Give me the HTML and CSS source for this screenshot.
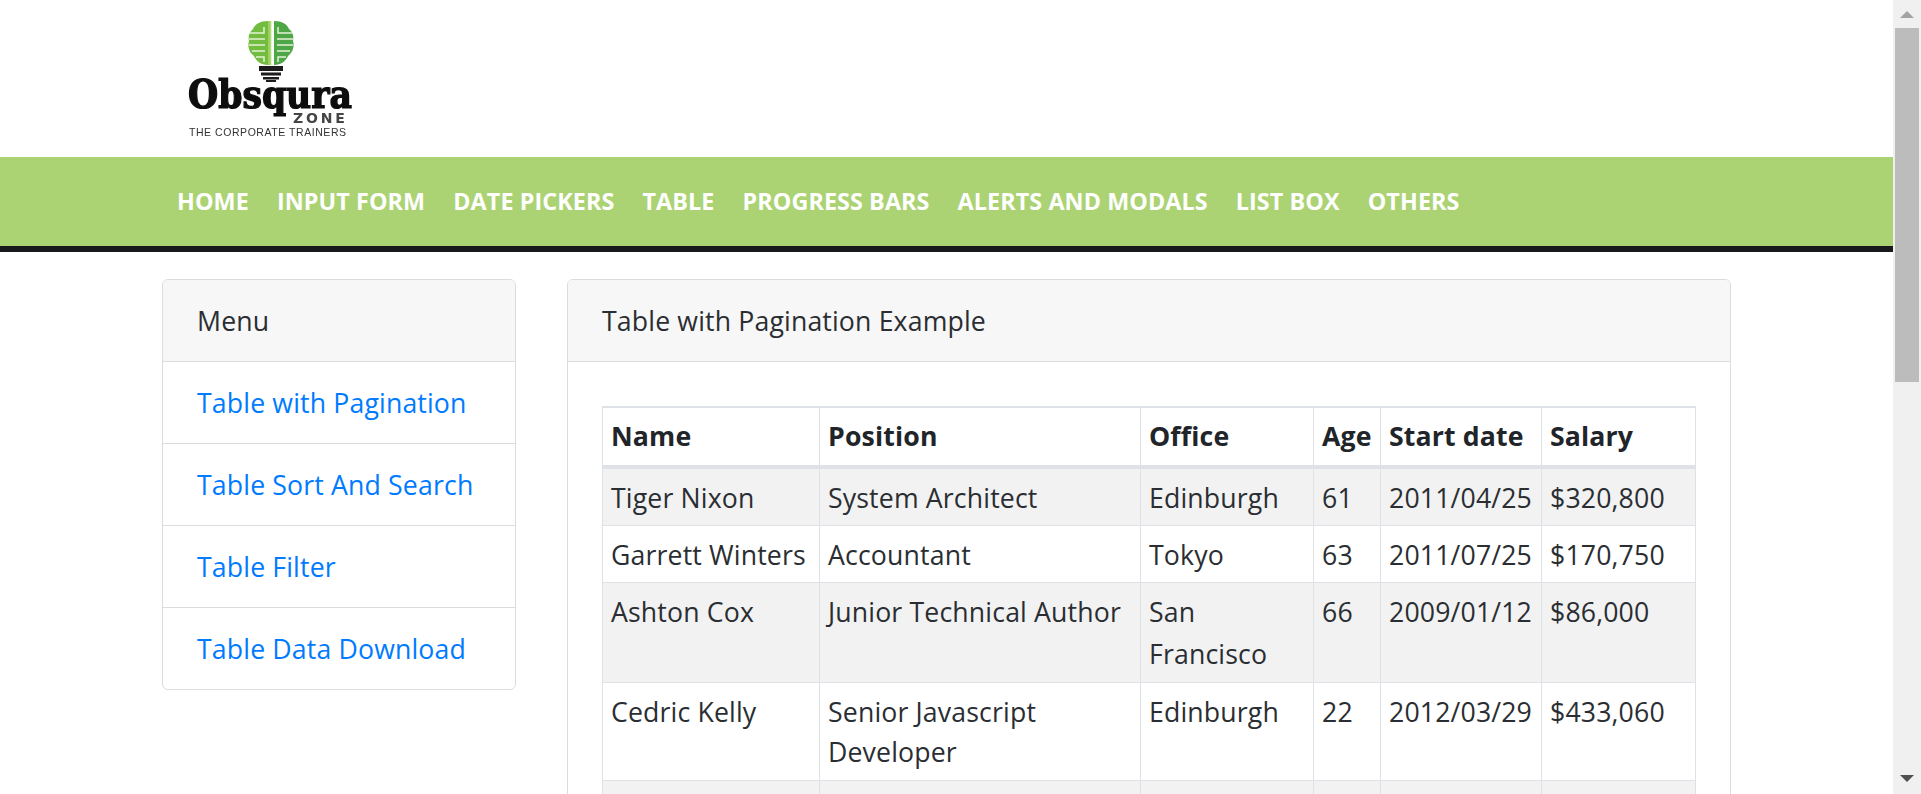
FILE: index.html
```html
<!DOCTYPE html>
<html>
<head>
	<meta charset="utf-8">
	<title>Obsqura Zone - Table with Pagination</title>
	<link rel="stylesheet" href="styles.css">
</head>

<body>

	<div class="page">
		<header class="top">
			<svg class="logo" width="180" height="130" viewBox="0 0 180 130">
				<defs>
					<filter id="soft"><feGaussianBlur stdDeviation="0.5"/></filter>
				</defs>
				<g filter="url(#soft)">
					<!-- bulb -->
					<path class="bulb-l" d="M88 3C80 3 75 6 73 11C69 14 68 19 69 23C67 29 70 35 74 38C76 43 81 47 88 47Z"/>
					<path class="bulb-r" d="M94 3C102 3 107 6 109 11C113 14 114 19 113 23C115 29 112 35 108 38C106 43 101 47 94 47Z"/>
					<path class="bulb-m" d="M88 3H91V47H88Z"/>
					<path class="bulb-c" d="M91.500 3V47M70 15H84V9M69 21H85M69 27H85M72 33H85M76 39H84V44M112 15H98V9M113 21H97M113 27H97M110 33H97M106 39H98V44"/>
					<path class="bulb-base" d="M79 48H103V53H79ZM81 54.500H101V57.500H81ZM83 59H99V61.500H83ZM86 62H96V64H86Z"/>
					<text class="logo-main" x="8" y="90">Obsqura</text>
					<text class="logo-zone" x="113" y="105">ZONE</text>
					<text class="logo-tag" x="9" y="118">THE CORPORATE TRAINERS</text>
				</g>
			</svg>
		</header>

		<nav class="navbar">
			<a href="#">Home</a>
			<a href="#">Input Form</a>
			<a href="#">Date Pickers</a>
			<a href="#">Table</a>
			<a href="#">Progress Bars</a>
			<a href="#">Alerts and Modals</a>
			<a href="#">List Box</a>
			<a href="#">Others</a>
		</nav>

		<div class="con">
			<aside class="card side">
				<div class="card-head">Menu</div>
				<ul class="menu">
					<li><a href="#">Table with Pagination</a></li>
					<li><a href="#">Table Sort And Search</a></li>
					<li><a href="#">Table Filter</a></li>
					<li><a href="#">Table Data Download</a></li>
				</ul>
			</aside>

			<main class="card main">
				<div class="card-head">Table with Pagination Example</div>
				<div class="card-body">
					<table class="data">
						<colgroup>
							<col class="c-name">
							<col class="c-pos">
							<col class="c-off">
							<col class="c-age">
							<col class="c-date">
							<col class="c-sal">
						</colgroup>
						<thead>
							<tr><th>Name</th><th>Position</th><th>Office</th><th>Age</th><th>Start date</th><th>Salary</th></tr>
						</thead>
						<tbody>
							<tr><td>Tiger Nixon</td><td>System Architect</td><td>Edinburgh</td><td>61</td><td>2011/04/25</td><td>$320,800</td></tr>
							<tr><td>Garrett Winters</td><td>Accountant</td><td>Tokyo</td><td>63</td><td>2011/07/25</td><td>$170,750</td></tr>
							<tr class="row-tall"><td>Ashton Cox</td><td>Junior Technical Author</td><td class="cell-wrap">San Francisco</td><td>66</td><td>2009/01/12</td><td>$86,000</td></tr>
							<tr class="row-wrap"><td>Cedric Kelly</td><td>Senior Javascript Developer</td><td>Edinburgh</td><td>22</td><td>2012/03/29</td><td>$433,060</td></tr>
							<tr class="row-next"><td></td><td></td><td></td><td></td><td></td><td></td></tr>
						</tbody>
					</table>
				</div>
			</main>
		</div>
	</div>

	<div class="scrollbar">
		<span class="arrow-up"></span>
		<span class="thumb"></span>
		<span class="arrow-down"></span>
	</div>

</body>
</html>
```

FILE: styles.css
```css
* {
	padding: 0;
	margin: 0;
	box-sizing: border-box;
}
html, body {
	height: 794px;
	overflow: hidden;
}
body {
	font-family: "Open Sans", "Noto Sans", sans-serif;
	font-size: 26.67px;
	line-height: 40px;
	letter-spacing: 0.15px;
	color: #2a2e32;
	background-color: #fff;
}
.page {
	width: 1893px;
}

/* logo */
.top {
	height: 157px;
	padding-left: 180px;
	padding-top: 18px;
}
.logo {
	display: block;
}
.bulb-l {
	fill: #72bd3f;
}
.bulb-r {
	fill: #4fa646;
}
.bulb-m {
	fill: #9fd05a;
}
.bulb-c {
	fill: none;
	stroke: #e4f2d6;
	stroke-width: 1.5;
}
.bulb-base {
	fill: #1c1c1c;
}
.logo-main {
	font-family: "DejaVu Serif Condensed", "DejaVu Serif", serif;
	font-weight: 700;
	font-size: 38.5px;
	letter-spacing: 0;
	fill: #0c0c0c;
	stroke: #0c0c0c;
	stroke-width: 1.2;
}
.logo-zone {
	font-family: "DejaVu Sans", sans-serif;
	font-weight: 700;
	font-size: 14px;
	letter-spacing: 2.8px;
	fill: #444;
}
.logo-tag {
	font-family: "Liberation Sans", sans-serif;
	font-size: 10.5px;
	letter-spacing: 0.55px;
	fill: #333;
}

/* nav */
.navbar {
	display: flex;
	gap: 28px;
	height: 95px;
	padding: 28px 0 0 177px;
	background-color: #abd373;
	border-bottom: 6px solid #17191c;
}
.navbar a {
	font-size: 23.33px;
	line-height: 33px;
	letter-spacing: 0.1px;
	font-weight: 700;
	color: #fff;
	text-transform: uppercase;
	text-decoration: none;
}

/* cards */
.con {
	display: flex;
	gap: 51px;
	align-items: flex-start;
	width: 1569px;
	margin: 27px 0 0 161.500px;
}
.card {
	border: 1px solid #dcdcdc;
	border-radius: 6px;
	background-color: #fff;
}
.side {
	width: 354px;
	flex: none;
}
.main {
	width: 1164px;
	flex: none;
}
.card-head {
	height: 82px;
	padding: 21px 33.500px 19px 34.500px;
	background-color: #f7f7f7;
	border-bottom: 1px solid #dcdcdc;
	border-radius: 5px 5px 0 0;
}
.menu {
	list-style: none;
}
.menu li {
	height: 82px;
	padding: 21px 33.500px 19px 34.500px;
	border-bottom: 1px solid #dcdcdc;
}
.menu li:last-child {
	height: 81px;
	border-bottom: 0;
}
.menu a {
	color: #007bff;
	text-decoration: none;
}
.card-body {
	padding: 44px 33.500px 0 34.500px;
}

/* table */
.data {
	width: 1093px;
	table-layout: fixed;
	border-collapse: collapse;
	border-top: 2px solid #dee2e6;
}
.c-name { width: 217px; }
.c-pos { width: 321px; }
.c-off { width: 173px; }
.c-age { width: 67px; }
.c-date { width: 161px; }
.c-sal { width: 154px; }
.data th, .data td {
	padding: 8px;
	border: 1px solid #dee2e6;
	text-align: left;
	vertical-align: top;
	font-weight: 400;
}
.data th {
	font-weight: 700;
	color: #212529;
	padding-bottom: 9px;
	border-bottom: 4px solid #dee2e6;
}
.data td {
	padding-top: 9px;
	padding-bottom: 7px;
}
.data tbody tr:nth-child(odd) {
	background-color: #f2f2f2;
}
.row-tall {
	height: 99px;
}
.row-wrap {
	height: 98px;
}
.row-next {
	height: 57px;
}
.data .cell-wrap {
	padding-top: 8px;
	line-height: 42px;
}

/* scrollbar drawn over the page */
.scrollbar {
	position: absolute;
	top: 0;
	right: 0;
	width: 28px;
	height: 794px;
	background-color: #f0f0f0;
}
.thumb {
	position: absolute;
	top: 28px;
	left: 2px;
	width: 24px;
	height: 354px;
	background-color: #bcbcbc;
}
.arrow-up, .arrow-down {
	position: absolute;
	left: 7px;
	width: 0;
	height: 0;
	border-left: 7px solid transparent;
	border-right: 7px solid transparent;
}
.arrow-up {
	top: 11px;
	border-bottom: 7px solid #a3a3a3;
}
.arrow-down {
	top: 775px;
	border-top: 7px solid #505050;
}
```
